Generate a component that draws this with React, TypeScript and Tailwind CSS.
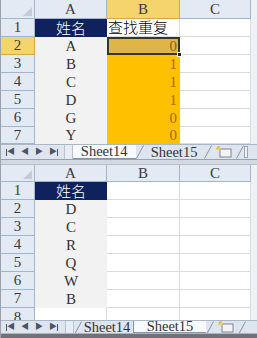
import React from 'react'

type Row = { n: number; a: string; b: string; h: number }

const topRows: Row[] = [
  { n: 2, a: 'A', b: '0', h: 18 },
  { n: 3, a: 'B', b: '1', h: 18 },
  { n: 4, a: 'C', b: '1', h: 18 },
  { n: 5, a: 'D', b: '1', h: 18 },
  { n: 6, a: 'G', b: '0', h: 18 },
  { n: 7, a: 'Y', b: '0', h: 17 },
]

const bottomRows: Row[] = [
  { n: 2, a: 'D', b: '', h: 18 },
  { n: 3, a: 'C', b: '', h: 18 },
  { n: 4, a: 'R', b: '', h: 18 },
  { n: 5, a: 'Q', b: '', h: 18 },
  { n: 6, a: 'W', b: '', h: 18 },
  { n: 7, a: 'B', b: '', h: 18 },
]

function Corner() {
  return (
    <div className="w-[34px] h-full bg-[#e3eaf3] border-r border-b border-[#9eb6ce] flex items-end justify-end p-[2px]">
      <svg width="9" height="9" viewBox="0 0 9 9">
        <polygon points="9,0 9,9 0,9" fill="#c5ccd6" />
      </svg>
    </div>
  )
}

function ColHeaders({ selB, h }: { selB: boolean; h: string }) {
  return (
    <div className={`flex ${h} text-[15px] text-[#3a3a3a]`}>
      <Corner />
      <div className="w-[72px] bg-[#e3eaf3] border-r border-b border-[#9eb6ce] flex items-center justify-center">A</div>
      <div
        className={`w-[73px] border-r border-b flex items-center justify-center ${
          selB ? 'bg-[#f6d46d] border-[#d9a83a]' : 'bg-[#e3eaf3] border-[#9eb6ce]'
        }`}
      >
        B
      </div>
      <div className="w-[71px] bg-[#e3eaf3] border-r border-b border-[#9eb6ce] flex items-center justify-center">C</div>
      <div className="flex-1 bg-[#eef1f5]" />
    </div>
  )
}

function NameRow({ extra }: { extra: string }) {
  return (
    <div className="flex h-[18px] text-[15px]">
      <div className="w-[34px] bg-[#e3eaf3] border-r border-b border-[#9eb6ce] flex items-center justify-center text-[#3a3a3a]">1</div>
      <div className="w-[72px] bg-[#10225e] text-white flex items-center justify-center text-[15px] font-['Noto_Sans_CJK_SC',sans-serif] font-light">
        姓名
      </div>
      <div className="w-[73px] bg-white border-r border-b border-[#dadcdd] flex items-center pl-[1px] text-[15px] text-black whitespace-nowrap font-['Noto_Sans_CJK_SC',sans-serif] font-light">
        {extra}
      </div>
      <div className="w-[71px] bg-white border-r border-b border-[#dadcdd]" />
      <div className="flex-1 bg-[#eef1f5]" />
    </div>
  )
}

function DataRow({ r, top }: { r: Row; top: boolean }) {
  const active = top && r.n === 2
  return (
    <div className="flex text-[15px]" style={{ height: r.h }}>
      <div
        className={`w-[34px] border-r border-b flex items-center justify-center text-[#3a3a3a] ${
          active ? 'bg-[#f6d46d] border-[#d9a83a]' : 'bg-[#e3eaf3] border-[#9eb6ce]'
        }`}
      >
        {r.n}
      </div>
      <div className="w-[72px] bg-[#f2f2f2] flex items-center justify-center text-[#333]">{r.a}</div>
      {top ? (
        active ? (
          <div className="relative w-[73px] bg-[#dfb645] border-2 border-[#2f3a2a] flex items-center justify-end pr-[1px] text-[#9a5a12]">
            {r.b}
            <div className="absolute right-[-4px] bottom-[-4px] w-[5px] h-[5px] bg-[#1f1f1f] border border-white" />
          </div>
        ) : (
          <div className="w-[73px] bg-[#ffc000] flex items-center justify-end pr-[3px] text-[#b5600f]">{r.b}</div>
        )
      ) : (
        <div className="w-[73px] bg-white border-r border-b border-[#dadcdd]" />
      )}
      <div className="w-[71px] bg-white border-r border-b border-[#dadcdd]" />
      <div className="flex-1 bg-[#eef1f5]" />
    </div>
  )
}

function Slash() {
  return (
    <svg width="8" height="14" viewBox="0 0 8 14" className="shrink-0">
      <line x1="0.5" y1="13.5" x2="7.5" y2="0.5" stroke="#8593a6" strokeWidth="1" />
    </svg>
  )
}

function NewSheetIcon() {
  return (
    <svg width="18" height="12" viewBox="0 0 18 12" className="shrink-0">
      <rect x="5" y="3" width="11" height="8" fill="#f4f4f4" stroke="#7a8698" />
      <path d="M2 1 L4 3 M4 0 L4 2 M1 3 L3 3" stroke="#e0b020" strokeWidth="1.2" />
      <circle cx="4" cy="3" r="1.6" fill="#f2d25a" />
    </svg>
  )
}

function TabBar({ active, h }: { active: 14 | 15; h: string }) {
  return (
    <div className={`flex items-stretch ${h} bg-[#dfe5ee] border-t border-[#a9b6c7] text-[14.5px] text-[#333] leading-none`}>
      <div className="w-[65px] flex items-center gap-[6px] pl-[5px] text-[#4b5566] text-[8px] border-r border-[#b8c2d0]">
        <span className="flex items-center">
          <span className="w-[1px] h-[7px] bg-[#4b5566]" />
          <span>◀</span>
        </span>
        <span>◀</span>
        <span>▶</span>
        <span className="flex items-center">
          <span>▶</span>
          <span className="w-[1px] h-[7px] bg-[#4b5566]" />
        </span>
      </div>
      <div className="w-[8px] bg-[#e9edf3] border-r border-[#b8c2d0]" />
      {active === 14 ? (
        <>
          <div className="w-[64px] bg-[#f7f9fb] flex items-center justify-center border-b border-[#8593a6]">Sheet14</div>
          <Slash />
          <div className="w-[62px] flex items-center justify-center">Sheet15</div>
        </>
      ) : (
        <>
          <Slash />
          <div className="w-[50px] flex items-center justify-center">Sheet14</div>
          <div className="w-[2px] border-r border-[#8593a6]" />
          <div className="w-[72px] bg-[#f7f9fb] flex items-center justify-center border-b border-[#8593a6]">Sheet15</div>
        </>
      )}
      <Slash />
      <div className="w-[24px] flex items-center justify-center">
        <NewSheetIcon />
      </div>
      <Slash />
      <div className="flex-1" />
      {active === 14 && <div className="w-[4px] my-[1px] bg-[#f3f5f8] border border-[#9aa6b6] mr-[9px]" />}
    </div>
  )
}

export default function App() {
  return (
    <div className="w-[257px] h-[338px] overflow-hidden bg-[#eef1f5] border-l border-[#9aa2ad] flex flex-col font-['Liberation_Serif','Noto_Sans_CJK_SC',serif]">
      {/* top pane */}
      <ColHeaders selB h="h-[19px]" />
      <NameRow extra="查找重复" />
      {topRows.map(r => (
        <DataRow key={r.n} r={r} top />
      ))}
      <TabBar active={14} h="h-[15px]" />

      {/* split bar */}
      <div className="h-[6px] bg-[#d3d9e1] border-t border-[#97a2b1] border-b border-b-[#b6bfcb]" />

      {/* bottom pane */}
      <ColHeaders selB={false} h="h-[17px]" />
      <NameRow extra="" />
      {bottomRows.map(r => (
        <DataRow key={r.n} r={r} top={false} />
      ))}
      <div className="flex h-[12px] text-[15px] overflow-hidden">
        <div className="w-[34px] bg-[#e3eaf3] border-r border-[#9eb6ce] flex items-start justify-center text-[#3a3a3a] leading-[16px] pt-[1px]">8</div>
        <div className="w-[72px] bg-white border-r border-[#dadcdd]" />
        <div className="w-[73px] bg-white border-r border-[#dadcdd]" />
        <div className="w-[71px] bg-white border-r border-[#dadcdd]" />
        <div className="flex-1 bg-[#eef1f5]" />
      </div>
      <TabBar active={15} h="h-[13px]" />
      <div className="flex-1 bg-[#6f7278] border-t border-[#b0b6bf]" />
    </div>
  )
}
